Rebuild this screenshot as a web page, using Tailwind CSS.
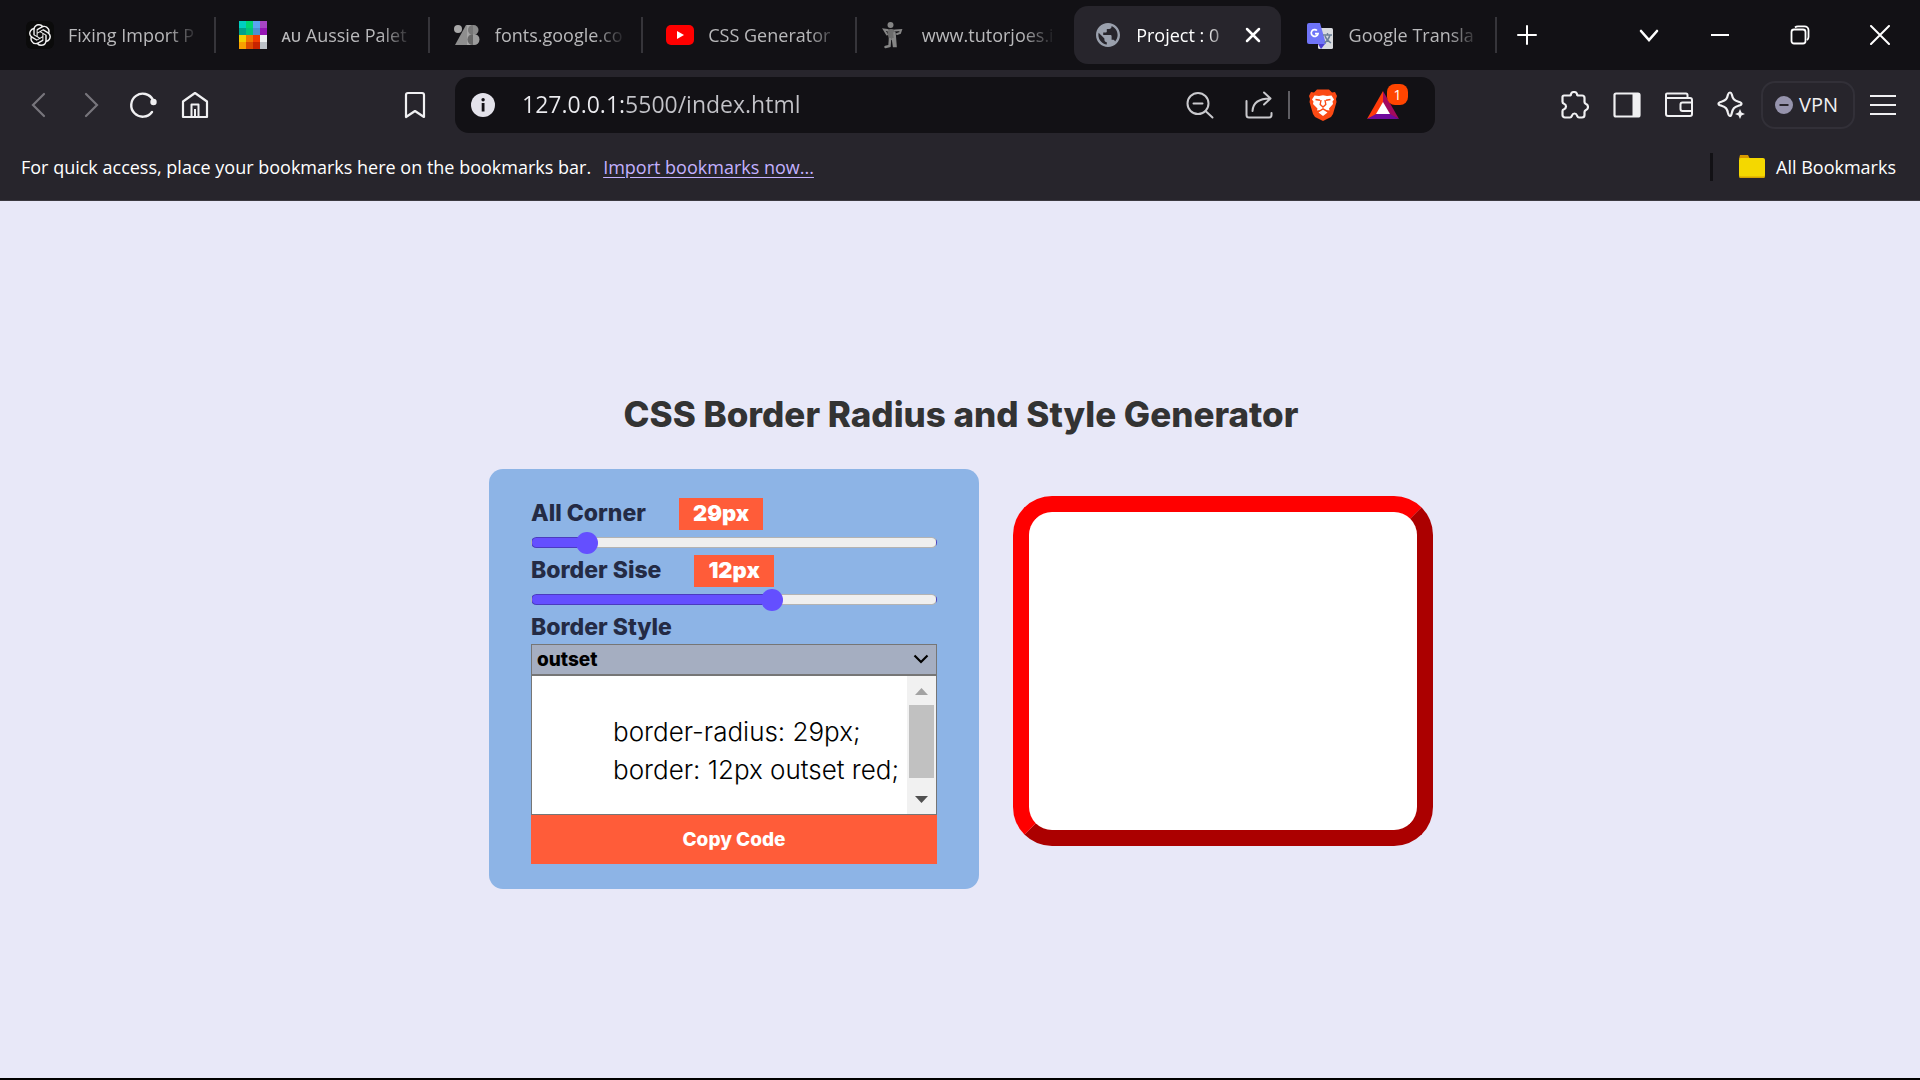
<!DOCTYPE html>
<html lang="en">
<head>
<meta charset="utf-8">
<meta name="viewport" content="width=device-width, initial-scale=1">
<title>CSS Border Radius and Style Generator</title>
<script src="https://cdn.jsdelivr.net/npm/@tailwindcss/browser@4"></script>
</head>
<body class="flex min-h-screen flex-col border-b-2 border-black bg-[#e8e8f8] font-['Open_Sans','Noto_Sans',sans-serif]">

<header class="border-b border-[#3b3940] bg-[#27252c] text-lg text-white">
  <!-- Tab strip -->
  <div class="flex h-[70px] items-center bg-[#121115] pl-[3px]">
    <nav aria-label="Tabs" class="grid min-w-0 max-w-[1494px] flex-1 grid-cols-7 items-center text-[#b9b9bb]">
      <a href="#" class="flex h-9 min-w-0 items-center gap-[14px] border-r-2 border-[#36353a] pl-[23px] pr-3">
        <span class="flex size-7 shrink-0 items-center justify-center rounded-md bg-[#0b0b0b]">
          <svg class="size-[22px]" viewBox="0 0 24 24" fill="#f1f1f1"><path d="M22.2819 9.8211a5.9847 5.9847 0 0 0-.5157-4.9108 6.0462 6.0462 0 0 0-6.5098-2.9A6.0651 6.0651 0 0 0 4.9807 4.1818a5.9847 5.9847 0 0 0-3.9977 2.9 6.0462 6.0462 0 0 0 .7427 7.0966 5.98 5.98 0 0 0 .511 4.9107 6.051 6.051 0 0 0 6.5146 2.9001A5.9847 5.9847 0 0 0 13.2599 24a6.0557 6.0557 0 0 0 5.7718-4.2058 5.9894 5.9894 0 0 0 3.9977-2.9001 6.0557 6.0557 0 0 0-.7475-7.0729zm-9.022 12.6081a4.4755 4.4755 0 0 1-2.8764-1.0408l.1419-.0804 4.7783-2.7582a.7948.7948 0 0 0 .3927-.6813v-6.7369l2.02 1.1686a.071.071 0 0 1 .038.052v5.5826a4.504 4.504 0 0 1-4.4945 4.4944zm-9.6607-4.1254a4.4708 4.4708 0 0 1-.5346-3.0137l.142.0852 4.783 2.7582a.7712.7712 0 0 0 .7806 0l5.8428-3.3685v2.3324a.0804.0804 0 0 1-.0332.0615L9.74 19.9502a4.4992 4.4992 0 0 1-6.1408-1.6464zM2.3408 7.8956a4.485 4.485 0 0 1 2.3655-1.9728V11.6a.7664.7664 0 0 0 .3879.6765l5.8144 3.3543-2.0201 1.1685a.0757.0757 0 0 1-.071 0l-4.8303-2.7865A4.504 4.504 0 0 1 2.3408 7.872zm16.5963 3.8558L13.1038 8.364 15.1192 7.2a.0757.0757 0 0 1 .071 0l4.8303 2.7913a4.4944 4.4944 0 0 1-.6765 8.1042v-5.6772a.79.79 0 0 0-.407-.667zm2.0107-3.0231l-.142-.0852-4.7735-2.7818a.7759.7759 0 0 0-.7854 0L9.409 9.2297V6.8974a.0662.0662 0 0 1 .0284-.0615l4.8303-2.7866a4.4992 4.4992 0 0 1 6.6802 4.66zM8.3065 12.863l-2.02-1.1638a.0804.0804 0 0 1-.038-.0567V6.0742a4.4992 4.4992 0 0 1 7.3757-3.4537l-.142.0805L8.704 5.459a.7948.7948 0 0 0-.3927.6813zm1.0976-2.3654l2.602-1.4998 2.6069 1.4998v2.9994l-2.5974 1.4997-2.6067-1.4997Z"/></svg>
        </span>
        <span class="min-w-0 flex-1 overflow-hidden whitespace-nowrap [mask-image:linear-gradient(to_right,black_74%,transparent_98%)]">Fixing Import P</span>
      </a>
      <a href="#" class="flex h-9 min-w-0 items-center gap-[14px] border-r-2 border-[#36353a] pl-[23px] pr-3">
        <svg class="size-7 shrink-0" viewBox="0 0 4 4" shape-rendering="crispEdges">
          <path fill="#00cfc0" d="M0 0h1v1H0z"/><path fill="#00d66f" d="M1 0h1v1H1z"/><path fill="#5aa5f0" d="M2 0h1v1H2z"/><path fill="#a845c4" d="M3 0h1v1H3z"/>
          <path fill="#00a189" d="M0 1h1v1H0z"/><path fill="#00c47c" d="M1 1h1v1H1z"/><path fill="#4c90d0" d="M2 1h1v1H2z"/><path fill="#9516b4" d="M3 1h1v1H3z"/>
          <path fill="#f2d000" d="M0 2h1v1H0z"/><path fill="#f07800" d="M1 2h1v1H1z"/><path fill="#f23c00" d="M2 2h1v1H2z"/><path fill="#ecf0f1" d="M3 2h1v1H3z"/>
          <path fill="#f9a000" d="M0 3h1v1H0z"/><path fill="#dc4c00" d="M1 3h1v1H1z"/><path fill="#c82400" d="M2 3h1v1H2z"/><path fill="#bcc2c8" d="M3 3h1v1H3z"/>
        </svg>
        <span class="min-w-0 flex-1 overflow-hidden whitespace-nowrap [mask-image:linear-gradient(to_right,black_74%,transparent_98%)]"><span class="text-sm font-semibold">AU</span> Aussie Palet</span>
      </a>
      <a href="#" class="flex h-9 min-w-0 items-center gap-[14px] border-r-2 border-[#36353a] pl-[23px] pr-3">
        <svg class="size-7 shrink-0" viewBox="0 0 28 28"><circle cx="5" cy="8" r="4" fill="#a8a8a8"/><path d="M13 4h6v20H2z" fill="#8e8e8e"/><path d="M14 4h6v20h-6z" fill="#a4a4a4"/><circle cx="20.500" cy="9" r="5" fill="#8a8a8a"/><circle cx="21" cy="18.500" r="5.500" fill="#9c9c9c"/><path d="M20 13a5.500 5.500 0 0 0 0 11z" fill="#666"/><path d="M20 4a5 5 0 0 0 0 10z" fill="#777"/></svg>
        <span class="min-w-0 flex-1 overflow-hidden whitespace-nowrap [mask-image:linear-gradient(to_right,black_74%,transparent_98%)]">fonts.google.co</span>
      </a>
      <a href="#" class="flex h-9 min-w-0 items-center gap-[14px] border-r-2 border-[#36353a] pl-[23px] pr-3">
        <svg class="size-7 shrink-0" viewBox="0 0 28 28"><rect y="4" width="28" height="20" rx="5" fill="#f00"/><path d="M11 10l7 4-7 4z" fill="#fff"/></svg>
        <span class="min-w-0 flex-1 overflow-hidden whitespace-nowrap [mask-image:linear-gradient(to_right,black_74%,transparent_98%)]">CSS Generator</span>
      </a>
      <a href="#" class="flex h-9 min-w-0 items-center gap-[14px] pl-[23px] pr-3">
        <svg class="size-7 shrink-0" viewBox="0 0 28 28" fill="none" stroke="#858585" stroke-linecap="round"><circle cx="10.500" cy="4" r="3" fill="#858585" stroke="none"/><path d="M7 9c3-1.500 6-1 8 0l-1.500 10H9z" fill="#6c6c6c" stroke="none"/><path d="M7.500 9L4 8.500l3 5M15 9.500l6-.5-1 3-3 1" stroke-width="2"/><path d="M10 18l-.5 7-4 1M13 18l1 7h1.500l-1-13" stroke-width="2.500"/></svg>
        <span class="min-w-0 flex-1 overflow-hidden whitespace-nowrap [mask-image:linear-gradient(to_right,black_74%,transparent_98%)]">www.tutorjoes.i</span>
      </a>
      <div class="flex h-[58px] min-w-0 items-center rounded-[14px] bg-[#27252c] ml-1 mr-[3px] pl-5 pr-3 text-white">
        <a href="#" aria-current="page" class="flex min-w-0 flex-1 items-center gap-[14px]">
          <svg class="size-7 shrink-0" viewBox="0 0 28 28"><path fill="#9aa0ad" transform="translate(-.4 -.4) scale(1.200)" d="M12 2C6.480 2 2 6.480 2 12s4.480 10 10 10 10-4.480 10-10S17.520 2 12 2zm-1 17.930c-3.950-.490-7-3.850-7-7.930 0-.620.080-1.210.210-1.790L9 15v1c0 1.100.9 2 2 2v1.930zm6.900-2.540c-.260-.810-1-1.390-1.900-1.390h-1v-3c0-.550-.450-1-1-1H8v-2h2c.550 0 1-.450 1-1V7h2c1.100 0 2-.9 2-2v-.410c2.930 1.190 5 4.060 5 7.410 0 2.080-.8 3.970-2.100 5.390z"/></svg>
          <span class="min-w-0 flex-1 overflow-hidden whitespace-nowrap [mask-image:linear-gradient(to_right,black_70%,transparent_94%)]">Project : 0</span>
        </a>
        <button type="button" aria-label="Close tab" class="flex size-8 shrink-0 items-center justify-center"><svg class="size-4" viewBox="0 0 16 16" stroke="#fff" stroke-width="2.500" stroke-linecap="round"><path d="M2 2l12 12M14 2L2 14"/></svg></button>
      </div>
      <a href="#" class="flex h-9 min-w-0 items-center gap-[14px] border-r-2 border-[#36353a] pl-[23px] pr-3">
        <svg class="size-7 shrink-0" viewBox="0 0 28 28"><rect x="11" y="7" width="15" height="21" rx="1.500" fill="#d9dbdf"/><path d="M11 23h7l-4 5z" fill="#4a3bd0"/><path d="M2 2h11l6 21H2a2 2 0 0 1-2-2V4a2 2 0 0 1 2-2z" fill="#6f74f7"/><path d="M10 9.500a3.400 3.400 0 1 0 1 3.200H8" fill="none" stroke="#fff" stroke-width="1.700"/><path d="M16 14h9M20.500 12v2M23 14c-1 4-3 6-5.500 8M18 15c1 3 3 5 6 7" fill="none" stroke="#6b7f96" stroke-width="1.400"/></svg>
        <span class="min-w-0 flex-1 overflow-hidden whitespace-nowrap [mask-image:linear-gradient(to_right,black_74%,transparent_98%)]">Google Transla</span>
      </a>
    </nav>
    <button type="button" aria-label="New tab" class="flex h-[70px] w-[60px] shrink-0 items-center justify-center"><svg class="size-5" viewBox="0 0 20 20" stroke="#fff" stroke-width="2" stroke-linecap="round"><path d="M10 1v18M1 10h18"/></svg></button>
    <div class="ml-auto flex shrink-0">
      <button type="button" aria-label="Search tabs" class="flex h-[70px] w-[62px] items-center justify-center"><svg class="size-5" viewBox="0 0 20 20" fill="none" stroke="#fff" stroke-width="2.600" stroke-linecap="round"><path d="M2 6l8 9 8-9"/></svg></button>
      <button type="button" aria-label="Minimize" class="flex h-[70px] w-20 items-center justify-center"><svg class="size-5" viewBox="0 0 20 20" stroke="#fff" stroke-width="2"><path d="M1 10h18"/></svg></button>
      <button type="button" aria-label="Restore" class="flex h-[70px] w-20 items-center justify-center"><svg class="size-5" viewBox="0 0 20 20" fill="none" stroke="#fff" stroke-width="1.800"><rect x="1.500" y="4.500" width="14" height="14" rx="2.500"/><path d="M5 2.500C6 1.500 7 1.300 8 1.300h6.500a4 4 0 0 1 4 4V12c0 1.500-.5 2.300-1.500 3.200"/></svg></button>
      <button type="button" aria-label="Close window" class="flex h-[70px] w-20 items-center justify-center"><svg class="size-5" viewBox="0 0 20 20" stroke="#fff" stroke-width="2" stroke-linecap="round"><path d="M1 1l18 18M19 1L1 19"/></svg></button>
    </div>
  </div>

  <!-- Toolbar -->
  <div class="flex h-[70px] items-center">
    <div class="flex w-[455px] shrink-0 items-center pl-[13px]">
      <button type="button" aria-label="Back" class="flex h-12 w-[52px] items-center justify-center"><svg class="size-7" viewBox="0 0 28 28" fill="none" stroke="#77757c" stroke-width="2.200" stroke-linecap="round"><path d="M19 3L8 14l11 11"/></svg></button>
      <button type="button" aria-label="Forward" class="flex h-12 w-[52px] items-center justify-center"><svg class="size-7" viewBox="0 0 28 28" fill="none" stroke="#77757c" stroke-width="2.200" stroke-linecap="round"><path d="M9 3l11 11L9 25"/></svg></button>
      <button type="button" aria-label="Reload" class="flex h-12 w-[52px] items-center justify-center"><svg class="size-7" viewBox="0 0 28 28" fill="none" stroke="#f0f0f2" stroke-width="2.400" stroke-linecap="round"><path d="M23 21A11.500 11.500 0 1 1 24 9"/><circle cx="24.500" cy="11" r="3.200" fill="#f0f0f2" stroke="none"/></svg></button>
      <button type="button" aria-label="Home" class="flex h-12 w-[52px] items-center justify-center"><svg class="size-7" viewBox="0 0 28 28" fill="none" stroke="#f0f0f2" stroke-width="2.200" stroke-linejoin="round"><path d="M2 10.500L14 2l12 8.500V26H2z"/><path d="M10.500 26V13.500h7V26M14 18v8" stroke-width="2"/></svg></button>
      <button type="button" aria-label="Bookmark this page" class="ml-auto flex h-12 w-20 items-center justify-center"><svg class="size-7" viewBox="0 0 28 28" fill="none" stroke="#f0f0f2" stroke-width="2.200" stroke-linejoin="round"><path d="M5 26V4a2 2 0 0 1 2-2h14a2 2 0 0 1 2 2v22l-9-6z"/></svg></button>
    </div>
    <div class="flex h-14 min-w-0 flex-1 items-center rounded-[14px] bg-[#121115] pl-[14px] pr-[25px]">
      <svg class="size-7 shrink-0" viewBox="0 0 28 28"><circle cx="14" cy="14" r="12" fill="#e3e2ea"/><rect x="12.700" y="12" width="2.800" height="8.500" fill="#121115"/><circle cx="14.100" cy="8.800" r="1.700" fill="#121115"/></svg>
      <input type="text" aria-label="Address" value="127.0.0.1:5500/index.html" class="ml-[25px] min-w-0 flex-1 bg-[linear-gradient(to_right,#ececf0_102px,#c3c3c8_102px)] bg-clip-text text-[23px] text-transparent outline-none">
      <button type="button" aria-label="Zoom out" class="flex h-12 w-[60px] shrink-0 items-center justify-center"><svg class="size-7" viewBox="0 0 28 28" fill="none" stroke="#c9c9cd" stroke-width="2" stroke-linecap="round"><circle cx="12" cy="12.500" r="10.500"/><path d="M19.500 20l7 6.500M7.500 12.500h9"/></svg></button>
      <button type="button" aria-label="Share" class="flex h-12 w-[58px] shrink-0 items-center justify-center"><svg class="size-7" viewBox="0 0 28 28" fill="none" stroke="#c9c9cd" stroke-width="2" stroke-linecap="round" stroke-linejoin="round"><path d="M1.500 10v14a2.500 2.500 0 0 0 2.500 2.500h20a2.500 2.500 0 0 0 2.500-2.500v-2"/><path d="M7.500 20C8 12 14 7.500 25 7.500M19 1.500l6.500 6L19 13.500"/></svg></button>
      <span class="h-7 w-[2px] shrink-0 bg-[#5f5e63]"></span>
      <button type="button" aria-label="Brave Shields" class="flex h-12 w-[66px] shrink-0 items-center justify-center"><svg class="h-8 w-7" viewBox="0 0 28 32"><path d="M8 .5h12l3 3 3-.5 2 4-1 3 .5 3-3.500 12-2 3L14 32l-8-4-2-3L.5 13 1 10 0 7l2-4 3 .5z" fill="#fb4a14"/><path d="M5.500 6.500l4.500.5 4-.8 4 .8 4.500-.5 2.500 4-1.500 2 .5 2.500-4 4.500.5 2-3-.5L14 19l-3 2-3 .5.500-2-4.500-4.500.5-2.500-1.500-2z" fill="#fff"/><path d="M14 20.800l4.500 2.700L14 27l-4.500-3.500z" fill="#fff"/><path d="M6.500 10.500l4.500.8M21.500 10.500l-4.500.8M12 11l-.8 4.500L14 18l2.800-2.500L16 11" fill="none" stroke="#fb4a14" stroke-width="1.400"/></svg></button>
      <button type="button" aria-label="Brave Rewards" class="relative flex h-12 w-[54px] shrink-0 items-center justify-center">
        <svg class="size-8" viewBox="0 0 32 32"><path d="M16 2L0 30l9-4 7-12z" fill="#ff3b0a"/><path d="M16 2l16 28-9-4-7-12z" fill="#a3095e"/><path d="M0 30h32l-9-5H9z" fill="#6f0a9c"/><path d="M16 13l7 12H9z" fill="#fff"/></svg>
        <span class="absolute right-[2px] top-[3px] flex size-[21px] items-center justify-center rounded-lg bg-[#ff4500] text-sm leading-none">1</span>
      </button>
    </div>
    <div class="flex w-[485px] shrink-0 items-center pl-[114px] text-[#f0f0f2]">
      <button type="button" aria-label="Extensions" class="flex h-12 w-[52px] items-center justify-center"><svg class="size-7" viewBox="0 0 28 28" fill="none" stroke="currentColor" stroke-width="2.200" stroke-linejoin="round"><path d="M3 4.500h5.500c1 0 1.500-.5 1.500-1.500C10.500 1.500 11.500 1 13 1s2.500.5 3 2c0 1 .5 1.500 1.500 1.500H21c1.500 0 2.500 1 2.500 2.500v4c0 1 .5 1.500 1.500 2 1.500.5 2 1.500 2 3s-.5 2.500-2 3c-1 .5-1.500 1-1.500 2v3c0 1.500-1 2.500-2.500 2.500h-3c-1.500 0-1.500-1-2-2-.5-1.500-1-2-2.500-2s-2 .5-2.500 2c-.5 1-.5 2-2 2H4c-1.500 0-2.500-1-2.500-2.500V20c0-1 .5-1.500 1.500-1.800C4.500 17.500 5 17 5 15.500S4.500 13.300 3 12.800c-1-.3-1.500-1-1.500-2V6c0-1 .5-1.500 1.500-1.500z"/></svg></button>
      <button type="button" aria-label="Sidebar" class="flex h-12 w-[52px] items-center justify-center"><svg class="size-7" viewBox="0 0 28 28"><rect x="1.500" y="2.500" width="25" height="23" rx="1.500" fill="none" stroke="currentColor" stroke-width="2.200"/><path d="M19.500 2.500h7v23h-7z" fill="currentColor"/></svg></button>
      <button type="button" aria-label="Wallet" class="flex h-12 w-[52px] items-center justify-center"><svg class="size-7" viewBox="0 0 28 28" fill="none" stroke="currentColor" stroke-width="2" stroke-linejoin="round"><path d="M22.500 7V4a1.500 1.500 0 0 0-1.500-1.500H2a1 1 0 0 0-1 1V23a2 2 0 0 0 2 2h22a2 2 0 0 0 2-2V9a2 2 0 0 0-2-2H1.500"/><path d="M27 11.500h-9.500a2 2 0 0 0-2 2V18a2 2 0 0 0 2 2H27"/></svg></button>
      <button type="button" aria-label="Leo AI" class="flex h-12 w-[52px] items-center justify-center"><svg class="size-7" viewBox="0 0 28 28" fill="none" stroke="currentColor" stroke-width="2.200" stroke-linejoin="round"><path d="M13 1.500c1 0 1.500.8 1.800 2 1 4.500 2.200 6 6.700 7.200 1.500.4 3 .8 3 2s-1.500 1.700-3 2c-4.500 1.200-5.700 3-6.700 7.300-.3 1.500-.8 3-1.800 3s-1.600-1.500-2-3c-1-4.300-2-6.100-6.500-7.300-1.500-.3-3-.8-3-2s1.500-1.600 3-2C9 9.500 10 8 11 3.500c.4-1.200 1-2 2-2z"/><path d="M23 18l1.500 3.500L28 23l-3.500 1.500L23 28l-1.500-3.500L18 23l3.500-1.500z" fill="currentColor" stroke="none"/></svg></button>
      <button type="button" class="ml-1 flex h-12 w-[94px] items-center gap-[6px] rounded-[14px] border-2 border-[#323038] pl-3 text-xl"><svg class="size-[18px]" viewBox="0 0 18 18"><circle cx="9" cy="9" r="9" fill="#9694ad"/><path d="M4.500 9h9" stroke="#27252c" stroke-width="2"/></svg>VPN</button>
      <button type="button" aria-label="Menu" class="flex h-12 w-14 items-center justify-center"><svg class="size-7" viewBox="0 0 28 28" stroke="currentColor" stroke-width="2.200"><path d="M1 5h26M1 14h26M1 23h26"/></svg></button>
    </div>
  </div>

  <!-- Bookmarks bar -->
  <div class="flex h-[60px] items-center pb-[6px] pl-[21px] pr-6">
    <p>For quick access, place your bookmarks here on the bookmarks bar.</p>
    <a href="#" class="ml-3 text-[#c3b1ff] underline underline-offset-3">Import bookmarks now...</a>
    <span class="ml-auto h-7 w-[3px] bg-[#121115]"></span>
    <button type="button" class="ml-[26px] flex items-center gap-[11px]"><svg class="h-6 w-[26px]" viewBox="0 0 26 24"><path d="M1 0h8l2 4H0z" fill="#d99a00"/><rect y="3" width="26" height="20" rx="2" fill="#f4d800"/><path d="M0 20v1a2 2 0 0 0 2 2h22a2 2 0 0 0 2-2v-1a2 2 0 0 1-2 1.500H2A2 2 0 0 1 0 20z" fill="#d6a400"/></svg>All Bookmarks</button>
  </div>
</header>

<main class="flex flex-1 flex-col items-center justify-center pl-[2px] font-['Inter','Noto_Sans',sans-serif]">
  <h1 class="mb-[31px] text-[35px] font-extrabold leading-[48px] text-[#333]">CSS Border Radius and Style Generator</h1>
  <div class="flex items-start gap-[34px]">
    <form class="w-[490px] rounded-[14px] bg-[#8db4e6] px-[42px] pb-[25px] pt-7 text-[23px] font-extrabold text-[#242b45]">
      <div class="flex h-[33px] items-center">
        <label for="corner">All Corner</label>
        <output for="corner" class="ml-[33px] flex h-8 items-center bg-[#ff5c39] px-[14px] text-[22px] font-black text-white">29px</output>
      </div>
      <input id="corner" type="range" min="0" max="250" value="29" style="--fill:14%" class="block h-6 w-full appearance-none bg-transparent [&::-webkit-slider-runnable-track]:box-border [&::-webkit-slider-runnable-track]:h-[11px] [&::-webkit-slider-runnable-track]:rounded-full [&::-webkit-slider-runnable-track]:border [&::-webkit-slider-runnable-track]:border-black/25 [&::-webkit-slider-runnable-track]:bg-[linear-gradient(to_right,#644fff_var(--fill),#efefef_var(--fill))] [&::-webkit-slider-thumb]:-mt-[6px] [&::-webkit-slider-thumb]:size-[22px] [&::-webkit-slider-thumb]:appearance-none [&::-webkit-slider-thumb]:rounded-full [&::-webkit-slider-thumb]:bg-[#644fff]">
      <div class="flex h-[33px] items-center">
        <label for="size">Border Sise</label>
        <output for="size" class="ml-[33px] flex h-8 items-center bg-[#ff5c39] px-[14px] text-[22px] font-black text-white">12px</output>
      </div>
      <input id="size" type="range" min="0" max="20" value="12" style="--fill:59%" class="block h-6 w-full appearance-none bg-transparent [&::-webkit-slider-runnable-track]:box-border [&::-webkit-slider-runnable-track]:h-[11px] [&::-webkit-slider-runnable-track]:rounded-full [&::-webkit-slider-runnable-track]:border [&::-webkit-slider-runnable-track]:border-black/25 [&::-webkit-slider-runnable-track]:bg-[linear-gradient(to_right,#644fff_var(--fill),#efefef_var(--fill))] [&::-webkit-slider-thumb]:-mt-[6px] [&::-webkit-slider-thumb]:size-[22px] [&::-webkit-slider-thumb]:appearance-none [&::-webkit-slider-thumb]:rounded-full [&::-webkit-slider-thumb]:bg-[#644fff]">
      <div class="flex h-[33px] items-center"><label for="style">Border Style</label></div>
      <div class="relative">
        <select id="style" class="block h-[31px] w-full appearance-none border border-[#767676] bg-[#a5aec1] pl-[5px] text-[19px] font-extrabold leading-none text-black">
          <option>outset</option><option>solid</option><option>dashed</option><option>dotted</option><option>double</option><option>groove</option><option>ridge</option><option>inset</option>
        </select>
        <svg class="pointer-events-none absolute right-2 top-[7px] size-4" viewBox="0 0 16 16" fill="none" stroke="#000" stroke-width="2.200"><path d="M1.500 4.500L8 11l6.500-6.500"/></svg>
      </div>
      <div class="flex h-[140px] border border-[#767676] bg-white">
        <textarea aria-label="Generated CSS" wrap="off" class="min-w-0 flex-1 resize-none overflow-hidden pl-[81px] pt-[37px] text-[26px] font-light leading-[38px] text-black outline-none">border-radius: 29px;
border: 12px outset red;</textarea>
        <div class="flex w-[29px] shrink-0 flex-col items-center bg-[#f1f1f1] pb-[11px] pt-3" aria-hidden="true">
          <svg class="h-2 w-[13px]" viewBox="0 0 13 8"><path d="M6.500 0L13 7H0z" fill="#a3a3a3"/></svg>
          <span class="mt-[9px] h-[73px] w-[25px] bg-[#c1c1c1]"></span>
          <svg class="mt-auto h-2 w-[13px]" viewBox="0 0 13 8"><path d="M6.500 8L13 1H0z" fill="#505050"/></svg>
        </div>
      </div>
      <button type="button" class="block h-[49px] w-full bg-[#ff5c39] pt-[2px] text-[19px] font-extrabold text-white">Copy Code</button>
    </form>
    <div class="mt-[27px] h-[350px] w-[420px] rounded-[39px] border-16 border-[red] bg-white [border-style:outset]"></div>
  </div>
</main>
</body>
</html>
